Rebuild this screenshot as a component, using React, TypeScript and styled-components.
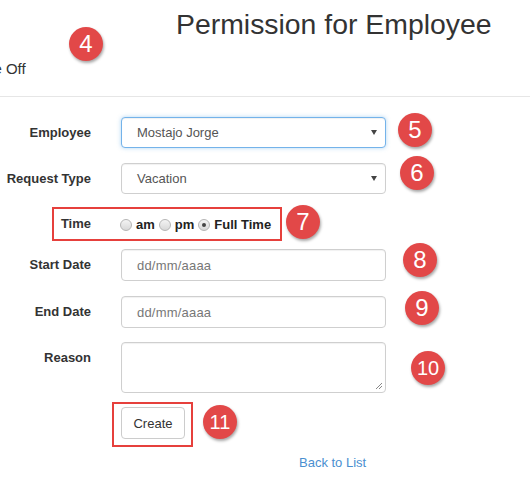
import React from "react";
import styled, { createGlobalStyle } from "styled-components";

const Global = createGlobalStyle`
  html, body { margin: 0; padding: 0; background: #fff; }
  body {
    font-family: "Liberation Sans", Arial, sans-serif;
    color: #333;
    font-size: 13px;
    overflow: hidden;
  }
  * { box-sizing: border-box; }
`;

const Page = styled.div`
  width: 530px;
  height: 489px;
  overflow: hidden;
  position: relative;
`;

const Header = styled.header`
  display: flex;
  align-items: flex-start;
  height: 96px;
`;

const NavText = styled.div`
  flex: none;
  margin-left: -31px;
  margin-top: 60px;
  font-size: 15px;
  line-height: 17px;
  white-space: nowrap;
  width: 58px;
`;

const Badge = styled.div<{ $mt?: number; $ml?: number; $fs?: number }>`
  flex: none;
  width: 34px;
  height: 34px;
  border-radius: 50%;
  background: #e24848;
  color: #fff;
  display: flex;
  align-items: center;
  justify-content: center;
  font-size: ${(p) => p.$fs ?? 24}px;
  line-height: 1;
  margin-top: ${(p) => p.$mt ?? 0}px;
  margin-left: ${(p) => p.$ml ?? 0}px;
  box-shadow: 1px 2px 3px rgba(0, 0, 0, 0.35);
`;

const Title = styled.h2`
  margin: 8px 0 0 73px;
  font-size: 28.4px;
  line-height: 32px;
  font-weight: 400;
  white-space: nowrap;
`;

const Rule = styled.hr`
  margin: 0;
  border: 0;
  border-top: 1px solid #e6e6e6;
`;

const Form = styled.form`
  display: flex;
  flex-direction: column;
  padding-top: 20px;
`;

const Row = styled.div<{ $mt?: number }>`
  display: flex;
  align-items: flex-start;
  margin-top: ${(p) => p.$mt ?? 0}px;
`;

const Label = styled.label<{ $w?: number; $h?: number }>`
  flex: none;
  width: ${(p) => p.$w ?? 91}px;
  text-align: right;
  font-weight: 700;
  font-size: 13px;
  line-height: ${(p) => p.$h ?? 31}px;
  white-space: nowrap;
`;

const Control = styled.div<{ $h?: number; $focus?: boolean }>`
  flex: none;
  margin-left: 30px;
  width: 265px;
  height: ${(p) => p.$h ?? 32}px;
  border: 1px solid ${(p) => (p.$focus ? "#74b3ea" : "#cfcfcf")};
  border-radius: 4px;
  background: #fff;
  box-shadow: ${(p) =>
    p.$focus
      ? "inset 0 1px 1px rgba(0,0,0,.06), 0 0 4px rgba(102,175,233,.5)"
      : "inset 0 1px 1px rgba(0,0,0,.06)"};
  display: flex;
  align-items: center;
  padding: 0 8px 0 15px;
  font-size: 13px;
  color: #555;
  position: relative;
`;

const ControlText = styled.span<{ $muted?: boolean }>`
  flex: 1;
  color: ${(p) => (p.$muted ? "#777" : "#555")};
  letter-spacing: ${(p) => (p.$muted ? "0.2px" : "0")};
`;

const Caret = styled.span`
  width: 0;
  height: 0;
  border-left: 3.5px solid transparent;
  border-right: 3.5px solid transparent;
  border-top: 5px solid #444;
`;

const Resize = styled.svg`
  position: absolute;
  right: 2px;
  bottom: 2px;
`;

const Highlight = styled.div`
  flex: none;
  display: flex;
  align-items: center;
  margin-left: 52px;
  width: 230px;
  height: 34px;
  border: 2px solid #e6403c;
`;

const Radios = styled.div`
  display: flex;
  align-items: center;
  margin-left: 29px;
  margin-top: 1px;
  white-space: nowrap;
`;

const RadioItem = styled.span`
  display: flex;
  align-items: center;
  margin-right: 4px;
  font-weight: 700;
  font-size: 13px;
  color: #222;
  white-space: nowrap;
`;

const RadioDot = styled.span<{ $checked?: boolean }>`
  flex: none;
  width: 12px;
  height: 12px;
  border-radius: 50%;
  border: 1px solid #b5b5b5;
  background: linear-gradient(#f4f4f4, #d8d8d8);
  margin-right: 4px;
  display: flex;
  align-items: center;
  justify-content: center;
  &::after {
    content: "";
    display: ${(p) => (p.$checked ? "block" : "none")};
    width: 4px;
    height: 4px;
    border-radius: 50%;
    background: #444;
  }
`;

const ButtonBox = styled.div`
  flex: none;
  margin-left: 112px;
  width: 81px;
  height: 45px;
  border: 2px solid #e6403c;
  padding: 3px 0 0 7px;
`;

const Button = styled.button`
  width: 64px;
  height: 32px;
  border: 1px solid #ccc;
  border-radius: 4px;
  background: #fff;
  font-family: "Liberation Sans", Arial, sans-serif;
  font-size: 13px;
  color: #333;
  padding: 0;
`;

const BackLink = styled.a`
  margin: 8px 0 0 299px;
  font-size: 13px;
  line-height: 16px;
  color: #4a8fd0;
  text-decoration: none;
`;

export default function App() {
  return (
    <Page>
      <Global />
      <Header>
        <NavText>Time Off</NavText>
        <Badge $mt={27} $ml={42}>4</Badge>
        <Title>Permission for Employee</Title>
      </Header>
      <Rule />
      <Form onSubmit={(e) => e.preventDefault()}>
        <Row>
          <Label>Employee</Label>
          <Control $h={31} $focus>
            <ControlText>Mostajo Jorge</ControlText>
            <Caret />
          </Control>
          <Badge $mt={-4} $ml={12}>5</Badge>
        </Row>
        <Row $mt={15}>
          <Label>Request Type</Label>
          <Control $h={31}>
            <ControlText>Vacation</ControlText>
            <Caret />
          </Control>
          <Badge $mt={-7} $ml={14}>6</Badge>
        </Row>
        <Row $mt={13}>
          <Highlight>
            <Label $w={37} $h={30}>Time</Label>
            <Radios>
              <RadioItem>
                <RadioDot />
                am
              </RadioItem>
              <RadioItem>
                <RadioDot />
                pm
              </RadioItem>
              <RadioItem>
                <RadioDot $checked />
                Full Time
              </RadioItem>
            </Radios>
          </Highlight>
          <Badge $mt={-2} $ml={4}>7</Badge>
        </Row>
        <Row $mt={8}>
          <Label $h={32}>Start Date</Label>
          <Control $h={32}>
            <ControlText $muted>dd/mm/aaaa</ControlText>
          </Control>
          <Badge $mt={-6} $ml={17}>8</Badge>
        </Row>
        <Row $mt={15}>
          <Label $h={32}>End Date</Label>
          <Control $h={32}>
            <ControlText $muted>dd/mm/aaaa</ControlText>
          </Control>
          <Badge $mt={-5} $ml={19}>9</Badge>
        </Row>
        <Row $mt={14}>
          <Label $h={32}>Reason</Label>
          <Control $h={51}>
            <Resize width="8" height="8" viewBox="0 0 8 8">
              <path d="M7 1 L1 7 M7 4 L4 7" stroke="#888" strokeWidth="1" />
            </Resize>
          </Control>
          <Badge $mt={9} $ml={25} $fs={20}>10</Badge>
        </Row>
        <Row $mt={9}>
          <ButtonBox>
            <Button type="button">Create</Button>
          </ButtonBox>
          <Badge $mt={3} $ml={10} $fs={20}>11</Badge>
        </Row>
        <BackLink href="#">Back to List</BackLink>
      </Form>
    </Page>
  );
}
